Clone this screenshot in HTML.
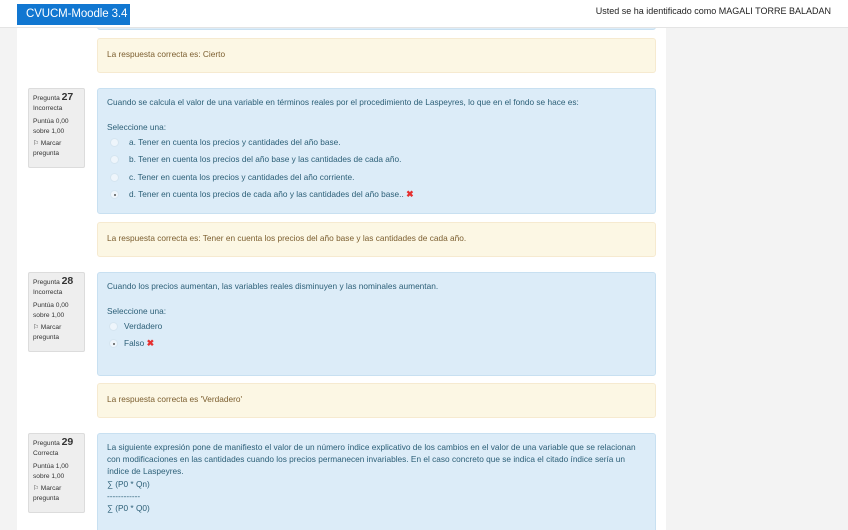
<!DOCTYPE html>
<html style="overflow:hidden;width:848px;height:530px"><head><meta charset="utf-8"><style>
*{margin:0;padding:0;box-sizing:border-box}
body{width:848px;height:530px;overflow:hidden;background:#f3f3f3;font-family:"Liberation Sans",sans-serif;position:relative}
.hdr{position:absolute;left:0;top:0;width:848px;height:28px;background:#fff;border-bottom:1px solid #e4e4e4;z-index:5}
.brand{position:absolute;left:17px;top:4px;width:113px;height:21px;background:#1177d1;color:#fff;font-size:11.5px;letter-spacing:-0.1px;line-height:21px;padding-left:9px;white-space:nowrap;overflow:hidden}
.user{position:absolute;right:17px;top:6px;font-size:9px;color:#222;white-space:nowrap}
.main{position:absolute;left:17px;top:28px;width:649px;height:502px;background:#fff}
.abs{position:absolute;white-space:nowrap}
.blue{position:absolute;left:97px;width:559px;background:#dcecf8;border:1px solid #c8e0f1;border-radius:3px;color:#2c5f77;font-size:8.3px;overflow:hidden}
.yel{position:absolute;left:97px;width:559px;height:35px;background:#fcf7e4;border:1px solid #f6ead0;border-radius:3px;color:#7b5e2f;font-size:8.3px;padding:10px 9px;white-space:nowrap}
.info{position:absolute;left:28px;width:57px;height:80px;background:#eeeeee;border:1px solid #dcdcdc;border-radius:2px;font-size:6.6px;color:#333;padding:4px 4px;line-height:9.5px}
.info b{font-size:10.5px;font-weight:bold}
.rad{position:absolute;width:9px;height:9px;border-radius:50%;background:#eef5fb;border:1px solid #d5e5f0}
.rad.s::after{content:"";position:absolute;left:2.5px;top:2.5px;width:2px;height:2px;border-radius:50%;background:#555}
.x{color:#e53030;font-weight:bold;font-size:9px}
</style></head><body>
<div class="hdr"><div class="brand">CVUCM-Moodle 3.4</div><div class="user">Usted se ha identificado como MAGALI TORRE BALADAN</div></div>
<div class="main"></div>
<div class="blue" style="top:20px;height:10px"></div>
<div class="yel" style="top:38px">La respuesta correcta es: Cierto</div>

<div class="info" style="top:88px">Pregunta <b>27</b><br>Incorrecta<div style="height:4px"></div>Puntúa 0,00<br>sobre 1,00<div style="height:3px"></div>⚐ Marcar<br>pregunta</div>
<div class="blue" style="top:88px;height:126px">
<div class="abs" style="left:9px;top:8px">Cuando se calcula el valor de una variable en términos reales por el procedimiento de Laspeyres, lo que en el fondo se hace es:</div>
<div class="abs" style="left:9px;top:33px">Seleccione una:</div>
<div class="rad" style="left:12px;top:49px"></div><div class="abs" style="left:31px;top:48px">a. Tener en cuenta los precios y cantidades del año base.</div>
<div class="rad" style="left:12px;top:66px"></div><div class="abs" style="left:31px;top:65px">b. Tener en cuenta los precios del año base y las cantidades de cada año.</div>
<div class="rad" style="left:12px;top:84px"></div><div class="abs" style="left:31px;top:83px">c. Tener en cuenta los precios y cantidades del año corriente.</div>
<div class="rad s" style="left:12px;top:101px"></div><div class="abs" style="left:31px;top:100px">d. Tener en cuenta los precios de cada año y las cantidades del año base.. <span class="x">✖</span></div>
</div>
<div class="yel" style="top:222px">La respuesta correcta es: Tener en cuenta los precios del año base y las cantidades de cada año.</div>

<div class="info" style="top:272px">Pregunta <b>28</b><br>Incorrecta<div style="height:4px"></div>Puntúa 0,00<br>sobre 1,00<div style="height:3px"></div>⚐ Marcar<br>pregunta</div>
<div class="blue" style="top:272px;height:104px">
<div class="abs" style="left:9px;top:8px">Cuando los precios aumentan, las variables reales disminuyen y las nominales aumentan.</div>
<div class="abs" style="left:9px;top:33px">Seleccione una:</div>
<div class="rad" style="left:11px;top:49px"></div><div class="abs" style="left:26px;top:48px">Verdadero</div>
<div class="rad s" style="left:11px;top:66px"></div><div class="abs" style="left:26px;top:65px">Falso <span class="x">✖</span></div>
</div>
<div class="yel" style="top:383px">La respuesta correcta es 'Verdadero'</div>

<div class="info" style="top:433px">Pregunta <b>29</b><br>Correcta<div style="height:4px"></div>Puntúa 1,00<br>sobre 1,00<div style="height:3px"></div>⚐ Marcar<br>pregunta</div>
<div class="blue" style="top:433px;height:97px;border-bottom:none;border-radius:3px 3px 0 0">
<div style="position:absolute;left:9px;top:7px;width:540px;line-height:12.2px">La siguiente expresión pone de manifiesto el valor de un número índice explicativo de los cambios en el valor de una variable que se relacionan<br>con modificaciones en las cantidades cuando los precios permanecen invariables. En el caso concreto que se indica el citado índice sería un<br>índice de Laspeyres.<br>∑ (P0 * Qn)<br>------------<br>∑ (P0 * Q0)</div>
</div>
</body></html>
